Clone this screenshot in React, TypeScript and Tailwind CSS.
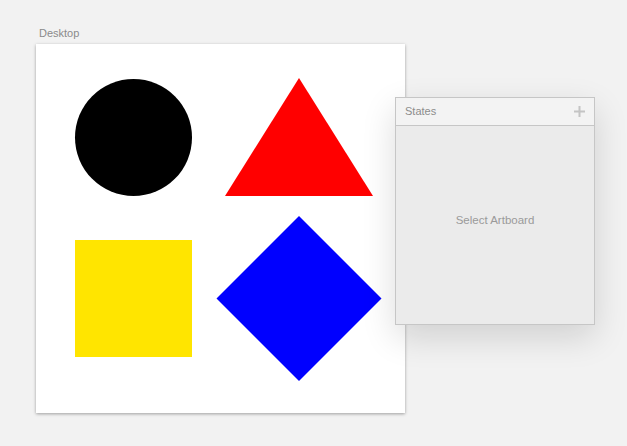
import { Component } from 'react'

class Artboard extends Component<any, any> {
  render() {
    return (
      <div className="flex flex-col">
        <div className="h-[14px] leading-[14px] mb-[4px] pl-[3px] text-[11px] text-[#8a8a8a]">Desktop</div>
        <div className="w-[369px] h-[369px] bg-white shadow-[0_1px_3px_rgba(0,0,0,0.35)]">
          <svg width="369" height="369" viewBox="0 0 369 369">
            <circle cx="97.5" cy="93.5" r="58.5" fill="#000" />
            <polygon points="263,34 189,152 337,152" fill="#ff0000" />
            <rect x="39" y="196" width="117" height="117" fill="#ffe500" />
            <polygon points="263,172 345.5,254.5 263,337 180.5,254.5" fill="#0000ff" />
          </svg>
        </div>
      </div>
    )
  }
}

class StatesPanel extends Component<any, any> {
  render() {
    return (
      <div className="ml-[-10px] mt-[71px] w-[200px] h-[228px] flex flex-col border border-[#c6c6c6] bg-[#ebebeb] shadow-[0_12px_32px_rgba(0,0,0,0.14)]">
        <div className="h-[28px] flex items-center justify-between pl-[9px] pr-[9px] bg-[#f3f3f3] border-b border-[#c6c6c6]">
          <span className="text-[11px] text-[#8c8c8c]">States</span>
          <svg width="11" height="11" viewBox="0 0 11 11">
            <rect x="4.5" y="0" width="2" height="11" fill="#c4c4c4" />
            <rect x="0" y="4.5" width="11" height="2" fill="#c4c4c4" />
          </svg>
        </div>
        <div className="flex-1 pt-[87px] text-center text-[11.5px] leading-[14px] text-[#9a9a9a]">Select Artboard</div>
      </div>
    )
  }
}

export default class App extends Component<any, any> {
  render() {
    return (
      <div className="w-[627px] h-[446px] bg-[#f2f2f2] pt-[26px] pl-[36px] flex items-start font-['Liberation_Sans',Arial,sans-serif]">
        <Artboard />
        <StatesPanel />
      </div>
    )
  }
}
